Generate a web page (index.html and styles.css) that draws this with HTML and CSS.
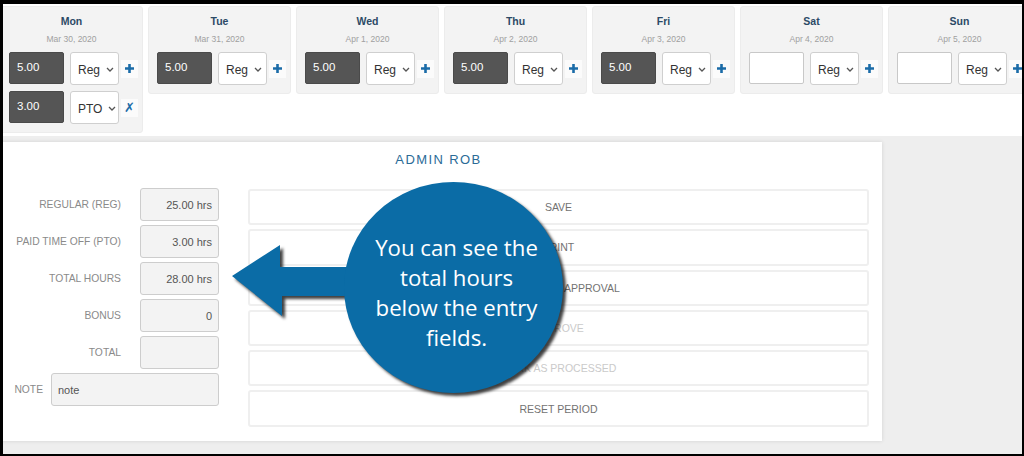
FILE: index.html
```html
<!DOCTYPE html>
<html lang="en">
<head>
  <meta charset="UTF-8">
  <title>Timesheet</title>
  <link rel="stylesheet" href="styles.css">
</head>
<body>
  <div class="frame">
    <div class="week">
      <div class="day">
        <div class="day-name">Mon</div>
        <div class="day-date">Mar 30, 2020</div>
        <div class="entry">
          <div class="hours filled">5.00</div>
          <div class="type">Reg <svg class="chev" viewBox="0 0 8 5"><path d="M1 1l3 3 3-3"/></svg></div>
          <div class="act"><svg class="plus" viewBox="0 0 9 9"><path d="M4.5 0v9M0 4.5h9"/></svg></div>
        </div>
        <div class="entry">
          <div class="hours filled">3.00</div>
          <div class="type">PTO <svg class="chev" viewBox="0 0 8 5"><path d="M1 1l3 3 3-3"/></svg></div>
          <div class="act remove">&#10007;</div>
        </div>
      </div>
      <div class="day">
        <div class="day-name">Tue</div>
        <div class="day-date">Mar 31, 2020</div>
        <div class="entry">
          <div class="hours filled">5.00</div>
          <div class="type">Reg <svg class="chev" viewBox="0 0 8 5"><path d="M1 1l3 3 3-3"/></svg></div>
          <div class="act"><svg class="plus" viewBox="0 0 9 9"><path d="M4.5 0v9M0 4.5h9"/></svg></div>
        </div>
      </div>
      <div class="day">
        <div class="day-name">Wed</div>
        <div class="day-date">Apr 1, 2020</div>
        <div class="entry">
          <div class="hours filled">5.00</div>
          <div class="type">Reg <svg class="chev" viewBox="0 0 8 5"><path d="M1 1l3 3 3-3"/></svg></div>
          <div class="act"><svg class="plus" viewBox="0 0 9 9"><path d="M4.5 0v9M0 4.5h9"/></svg></div>
        </div>
      </div>
      <div class="day">
        <div class="day-name">Thu</div>
        <div class="day-date">Apr 2, 2020</div>
        <div class="entry">
          <div class="hours filled">5.00</div>
          <div class="type">Reg <svg class="chev" viewBox="0 0 8 5"><path d="M1 1l3 3 3-3"/></svg></div>
          <div class="act"><svg class="plus" viewBox="0 0 9 9"><path d="M4.5 0v9M0 4.5h9"/></svg></div>
        </div>
      </div>
      <div class="day">
        <div class="day-name">Fri</div>
        <div class="day-date">Apr 3, 2020</div>
        <div class="entry">
          <div class="hours filled">5.00</div>
          <div class="type">Reg <svg class="chev" viewBox="0 0 8 5"><path d="M1 1l3 3 3-3"/></svg></div>
          <div class="act"><svg class="plus" viewBox="0 0 9 9"><path d="M4.5 0v9M0 4.5h9"/></svg></div>
        </div>
      </div>
      <div class="day">
        <div class="day-name">Sat</div>
        <div class="day-date">Apr 4, 2020</div>
        <div class="entry">
          <div class="hours"></div>
          <div class="type">Reg <svg class="chev" viewBox="0 0 8 5"><path d="M1 1l3 3 3-3"/></svg></div>
          <div class="act"><svg class="plus" viewBox="0 0 9 9"><path d="M4.5 0v9M0 4.5h9"/></svg></div>
        </div>
      </div>
      <div class="day">
        <div class="day-name">Sun</div>
        <div class="day-date">Apr 5, 2020</div>
        <div class="entry">
          <div class="hours"></div>
          <div class="type">Reg <svg class="chev" viewBox="0 0 8 5"><path d="M1 1l3 3 3-3"/></svg></div>
          <div class="act"><svg class="plus" viewBox="0 0 9 9"><path d="M4.5 0v9M0 4.5h9"/></svg></div>
        </div>
      </div>
    </div>

    <div class="lower">
      <div class="panel">
        <div class="panel-title">ADMIN ROB</div>
        <div class="panel-body">
          <div class="totals">
            <div class="label">Regular (REG)</div>
            <div class="value">25.00 hrs</div>
            <div class="label">Paid Time Off (PTO)</div>
            <div class="value">3.00 hrs</div>
            <div class="label">Total Hours</div>
            <div class="value">28.00 hrs</div>
            <div class="label">Bonus</div>
            <div class="value">0</div>
            <div class="label">Total</div>
            <div class="value"></div>
            <div class="note-row">
              <div class="label note-label">Note</div>
              <div class="note">note</div>
            </div>
          </div>
          <div class="actions">
            <div class="btn">Save</div>
            <div class="btn">Print</div>
            <div class="btn">Submit for approval</div>
            <div class="btn disabled">Approve</div>
            <div class="btn disabled">Mark as processed</div>
            <div class="btn">Reset period</div>
          </div>
        </div>
      </div>
    </div>

    <svg class="arrow" viewBox="0 0 160 100">
      <polygon points="9,42 57,11 57,33 150,33 150,62 59,62 59,82"/>
    </svg>
    <div class="bubble">
      <div>You can see the</div>
      <div>total hours</div>
      <div>below the entry</div>
      <div>fields.</div>
    </div>
  </div>
</body>
</html>
```

FILE: styles.css
```css
body {
  margin: 0;
  background: #000;
  font-family: "Liberation Sans", Arial, sans-serif;
}
.frame {
  position: relative;
  margin: 4px 2px 2px 3px;
  height: 450px;
  overflow: hidden;
  background: #fff;
  display: flex;
  flex-direction: column;
}

/* week cards */
.week {
  display: flex;
  align-items: flex-start;
  gap: 5px;
  margin: 2px 0 0 -3px;
  height: 130px;
}
.day {
  flex: 0 0 143px;
  min-width: 0;
  box-sizing: border-box;
  padding: 7px 4px 8px 8px;
  background: #f3f3f3;
  border: 1px solid #ececec;
  border-radius: 3px;
}
.day-name {
  text-align: center;
  font-size: 10.5px;
  font-weight: bold;
  line-height: 14px;
  color: #2c4a66;
  margin-right: 4px;
}
.day-date {
  text-align: center;
  font-size: 8.5px;
  line-height: 12px;
  margin: 5px 4px 0 0;
  color: #a0a0a0;
}
.entry {
  display: flex;
  align-items: center;
  margin-top: 7px;
  height: 33px;
}
.entry + .entry {
  margin-top: 6px;
}
.hours {
  flex: 0 0 55px;
  box-sizing: border-box;
  height: 32px;
  margin-bottom: 1px;
  padding: 8px 7px;
  border: 1px solid #c8c8c8;
  border-radius: 2px;
  background: #fff;
  font-size: 11.5px;
  color: #fff;
}
.hours.filled {
  background: #555;
  border-color: #4a4a4a;
}
.type {
  flex: 0 0 49px;
  box-sizing: border-box;
  height: 33px;
  margin-left: 6px;
  padding: 10px 0 0 7px;
  border: 1px solid #cfcfcf;
  border-radius: 3px;
  background: #fff;
  font-size: 12px;
  color: #333;
  display: flex;
  gap: 6px;
}
.chev {
  width: 8px;
  height: 5px;
  margin-top: 4px;
  fill: none;
  stroke: #555;
  stroke-width: 1.3;
}
.act {
  flex: 0 0 17px;
  height: 18px;
  margin-left: 2px;
  background: #fbfbfb;
  display: flex;
  align-items: center;
  justify-content: center;
  color: #1b6ca8;
}
.plus {
  width: 9px;
  height: 9px;
  stroke: #1b6ca8;
  stroke-width: 2.6;
}
.remove {
  font-family: "DejaVu Sans", sans-serif;
  font-size: 13px;
}

/* summary panel */
.lower {
  flex: 1;
  background: #eeeeee;
  padding: 6px 0 13px;
}
.panel {
  width: 882px;
  height: 299px;
  margin-left: -3px;
  box-sizing: border-box;
  padding: 9px 13px 0 0;
  background: #fff;
  box-shadow: 0 0 4px rgba(0,0,0,0.12);
}
.panel-title {
  text-align: center;
  font-size: 13px;
  line-height: 18px;
  letter-spacing: 1.4px;
  color: #2b6b97;
  padding-left: 8px;
  margin-bottom: 19px;
}
.panel-body {
  display: flex;
}
.totals {
  display: grid;
  grid-template-columns: 121px 79px;
  grid-auto-rows: 33px;
  column-gap: 19px;
  row-gap: 4px;
  align-items: center;
}
.label {
  text-align: right;
  font-size: 10.3px;
  text-transform: uppercase;
  color: #8a8a8a;
}
.value, .note {
  box-sizing: border-box;
  height: 33px;
  padding: 10px 6px 0;
  background: #f3f3f3;
  border: 1px solid #cdcdcd;
  border-radius: 3px;
  text-align: right;
  font-size: 11px;
  color: #555;
}
.note-row {
  grid-column: 1 / -1;
  display: flex;
  align-items: center;
}
.note-label {
  width: 43px;
}
.note {
  flex: 1;
  margin-left: 8px;
  text-align: left;
}
.actions {
  flex: 1;
  margin: 1px 0 0 29px;
  display: flex;
  flex-direction: column;
  gap: 4px;
}
.btn {
  box-sizing: border-box;
  height: 36.3px;
  border: 2px solid #efefef;
  border-radius: 3px;
  background: #fff;
  display: flex;
  align-items: center;
  justify-content: center;
  font-size: 10.5px;
  text-transform: uppercase;
  color: #727272;
}
.btn.disabled {
  color: #cacaca;
}

/* callout overlay */
.arrow {
  position: absolute;
  left: 220px;
  top: 230px;
  width: 160px;
  height: 100px;
  fill: #0b6ca6;
  filter: drop-shadow(3px 3px 1.5px rgba(0,0,0,0.75));
}
.bubble {
  position: absolute;
  left: 341px;
  top: 178px;
  width: 219px;
  height: 211px;
  box-sizing: border-box;
  padding: 10px 0 0 6px;
  border-radius: 50%;
  background: #0b6ca6;
  box-shadow: 3px 3px 3px rgba(0,0,0,0.75);
  display: flex;
  flex-direction: column;
  justify-content: center;
  text-align: center;
  font-family: "Open Sans", sans-serif;
  font-size: 22.2px;
  line-height: 30px;
  color: #fff;
}
```
